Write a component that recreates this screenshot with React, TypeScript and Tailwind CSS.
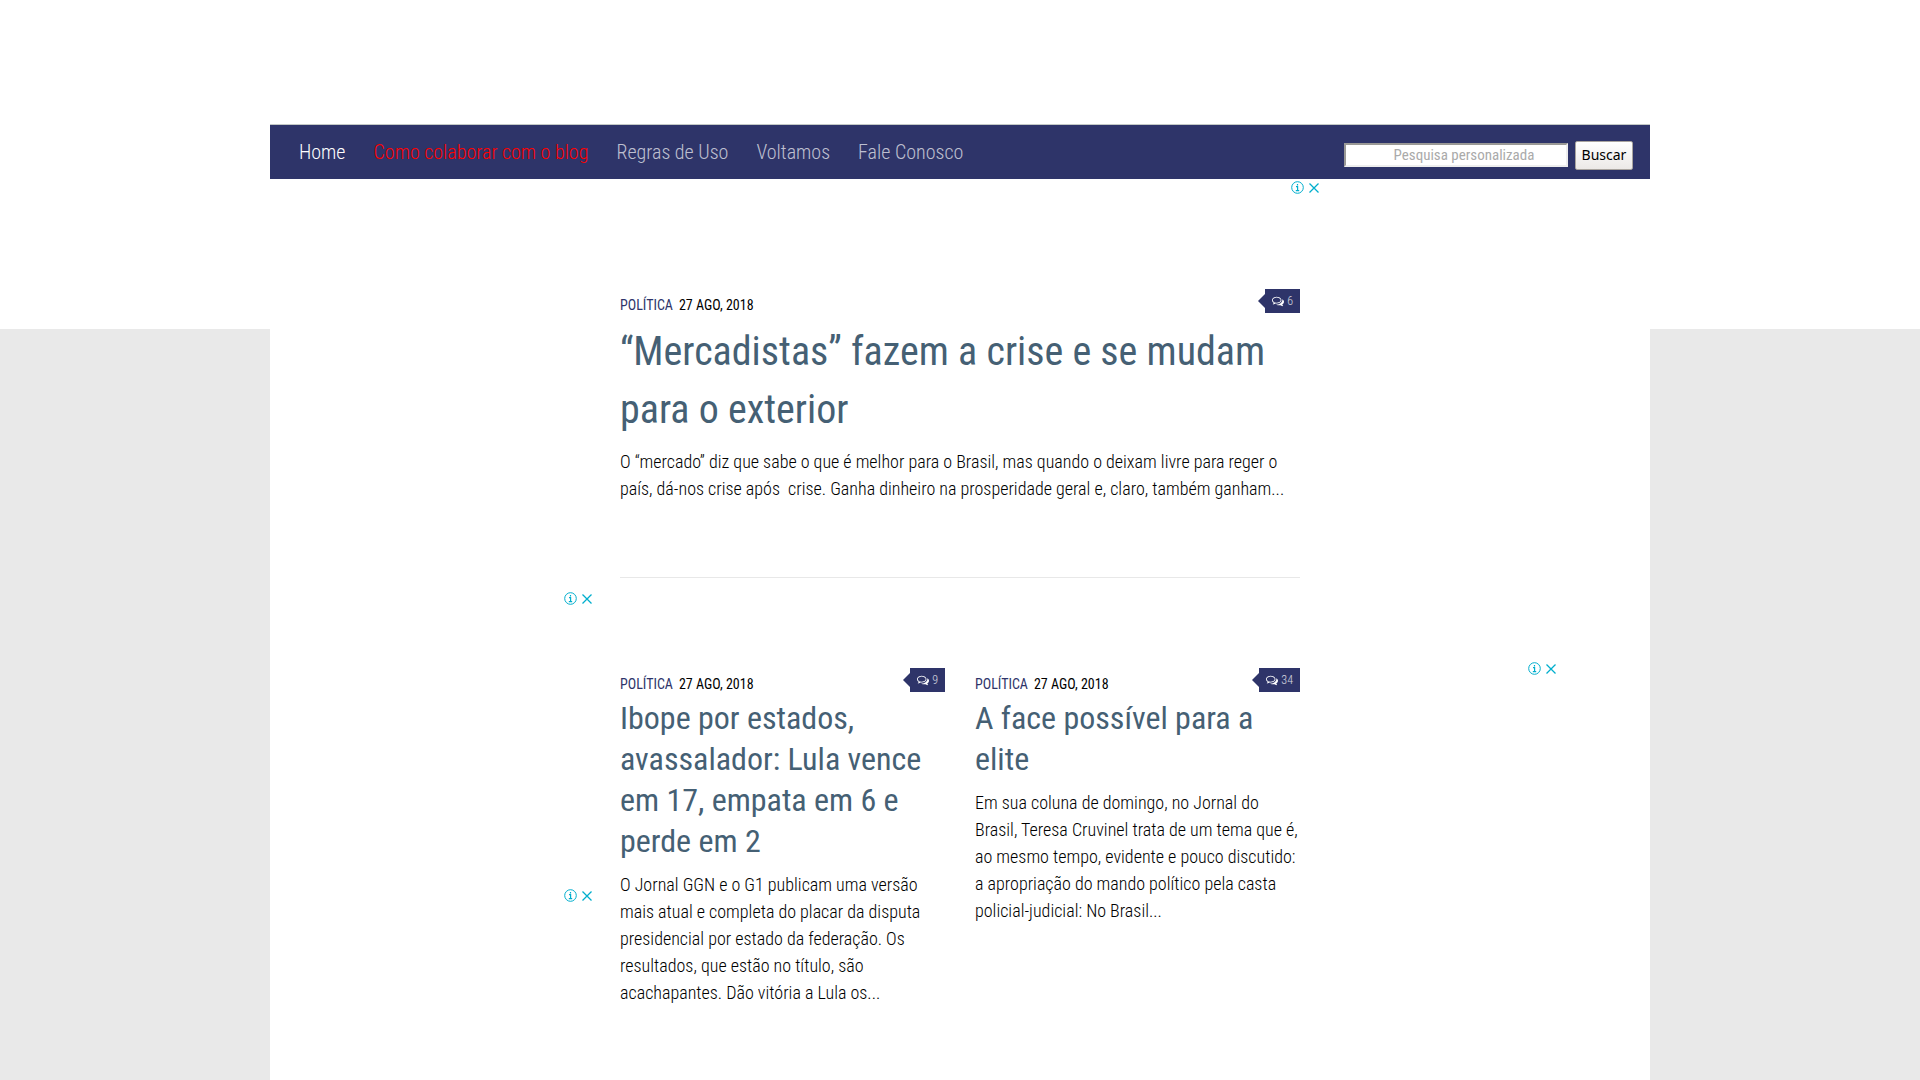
import React from "react";

type Post = { title: string; excerpt: string; comments: number };

const lead: Post = {
  title: "“Mercadistas” fazem a crise e se mudam para o exterior",
  excerpt:
    "O “mercado” diz que sabe o que é melhor para o Brasil, mas quando o deixam livre para reger o país, dá-nos crise após \u00a0crise. Ganha dinheiro na prosperidade geral e, claro, também ganham...",
  comments: 6,
};

const posts: Post[] = [
  {
    title: "Ibope por estados, avassalador: Lula vence em 17, empata em 6 e perde em 2",
    excerpt:
      "O Jornal GGN e o G1 publicam uma versão mais atual e completa do placar da disputa presidencial por estado da federação. Os resultados, que estão no título, são acachapantes. Dão vitória a Lula os...",
    comments: 9,
  },
  {
    title: "A face possível para a elite",
    excerpt:
      "Em sua coluna de domingo, no Jornal do Brasil, Teresa Cruvinel trata de um tema que é, ao mesmo tempo, evidente e pouco discutido: a apropriação do mando político pela casta policial-judicial: No Brasil...",
    comments: 34,
  },
];

const links = [
  { label: "Home", color: "text-white" },
  { label: "Como colaborar com o blog", color: "text-[#ff0000]" },
  { label: "Regras de Uso", color: "text-white/70" },
  { label: "Voltamos", color: "text-white/70" },
  { label: "Fale Conosco", color: "text-white/70" },
];

function AdChoices() {
  return (
    <div className="flex h-[13px] items-center gap-1 text-[#00aecd]">
      <button type="button" aria-label="Sobre este anúncio">
        <svg viewBox="0 0 13 13" className="size-[13px]" fill="none" stroke="currentColor">
          <circle cx="6.5" cy="6.5" r="5.8" />
          <path d="M6.5 3v1.4M5 5.6h1.6V10M4.8 9.7h3.4" strokeWidth="1.2" />
        </svg>
      </button>
      <button type="button" aria-label="Fechar anúncio">
        <svg viewBox="0 0 12 12" className="size-3" fill="none" stroke="currentColor" strokeWidth="1.3">
          <path d="M1.5 1.5l9 9M10.5 1.5l-9 9" />
        </svg>
      </button>
    </div>
  );
}

function CommentsIcon() {
  return (
    <svg viewBox="0 0 1792 1792" className="size-3 fill-white" aria-hidden="true">
      <path d="M704 384q-153 0-286 52t-211.5 141-78.5 191q0 82 53 158t149 132l97 56-35 84q34-20 62-39l44-31 53 10q78 14 153 14 153 0 286-52t211.5-141 78.5-191-78.5-191-211.5-141-286-52zm0-128q191 0 353.5 68.5t256.5 186.5 94 257-94 257-256.5 186.5-353.5 68.5q-86 0-176-16-124 88-278 128-36 9-86 16h-3q-11 0-20.5-8t-11.5-21q-1-3-1-6.5t.5-6.5 2-6l2.5-5 3.5-5.5 4-5 4.5-5 4-4.5q5-6 23-25t26-29.5 22.5-29 25-38.5 20.5-44q-124-72-195-177t-71-224q0-139 94-257t256.5-186.5 353.5-68.5zm822 1169q10 24 20.5 44t25 38.5 22.5 29 26 29.5 23 25q1 1 4 4.5t4.5 5 4 5 3.5 5.5l2.5 5 2 6 .5 6.5-1 6.5q-3 14-13 22t-22 7q-50-7-86-16-154-40-278-128-90 16-176 16-271 0-472-132 58 4 88 4 161 0 309-45t264-129q125-92 192-212t67-254q0-77-23-152 129 71 204 178t75 230q0 120-71 224.5t-195 176.5z" />
    </svg>
  );
}

function CommentBadge({ count }: { count: number }) {
  return (
    <a href="#comentarios" className="flex items-center text-white/80">
      <span className="border-y-7 border-r-7 border-y-transparent border-r-[#2e3469]" />
      <span className="flex h-6 items-center gap-[3px] bg-[#2e3469] px-[7px] text-xs font-light">
        <CommentsIcon />
        {count}
      </span>
    </a>
  );
}

function Meta({ count }: { count: number }) {
  return (
    <div className="flex items-start justify-between">
      <p className="mt-1 flex gap-1.5 text-sm leading-6 uppercase">
        <a href="#politica" className="text-[#2e3469]">Política</a>
        <time dateTime="2018-08-27" className="text-black">27 ago, 2018</time>
      </p>
      <CommentBadge count={count} />
    </div>
  );
}

export default function App() {
  return (
    <div className="min-h-screen bg-[linear-gradient(#fff_329px,#e9e9e9_329px)] font-['Roboto_Condensed','Roboto',sans-serif] text-black">
      <div className="mx-auto min-h-screen max-w-[1380px] bg-white pt-31">
        <header className="flex h-[55px] items-center justify-between border-t border-[#c3c9c6] bg-[#2e3469] pr-[17px] pl-[29px]">
          <nav className="flex gap-7 text-xl font-light">
            {links.map((l) => (
              <a key={l.label} href="#inicio" className={l.color}>{l.label}</a>
            ))}
          </nav>
          <form className="mt-1.5 flex items-center gap-[7px]" onSubmit={(e) => e.preventDefault()}>
            <input
              aria-label="Pesquisa personalizada"
              placeholder="Pesquisa personalizada"
              className="h-6 w-56 border-2 border-t-[#9a9996] border-r-[#eee] border-b-[#eee] border-l-[#9a9996] bg-white pl-4 text-center text-[15px] placeholder:text-[#aaa]"
            />
            <button className="h-[29px] w-[58px] rounded-xs border border-[#a9a49f] bg-linear-to-b from-white to-[#ece9e7] font-['Noto_Sans',sans-serif] text-sm">
              Buscar
            </button>
          </form>
        </header>

        <div className="grid grid-cols-[350px_minmax(0,1fr)_350px]">
          <aside className="flex flex-col items-end gap-[284px] pt-[413px] pr-[27px]">
            <AdChoices />
            <AdChoices />
          </aside>

          <main>
            <div className="-mr-5 flex justify-end pt-0.5">
              <AdChoices />
            </div>
            <article className="mt-[95px] border-b border-[#e8e8e8] pb-[75px]">
              <Meta count={lead.comments} />
              <h2 className="mt-1.5 text-[40px] leading-[58px] text-[#456074]">
                <a href="#post">{lead.title}</a>
              </h2>
              <p className="mt-[9px] text-lg leading-[27px] font-light">{lead.excerpt}</p>
            </article>
            <div className="mt-[90px] grid grid-cols-2 gap-[30px]">
              {posts.map((p) => (
                <article key={p.title}>
                  <Meta count={p.comments} />
                  <h2 className="mt-0.5 text-[32px] leading-[41px] text-[#456074]">
                    <a href="#post">{p.title}</a>
                  </h2>
                  <p className="mt-[9px] text-lg leading-[27px] font-light">{p.excerpt}</p>
                </article>
              ))}
            </div>
          </main>

          <aside className="flex flex-col items-end pt-[483px] pr-[93px]">
            <AdChoices />
          </aside>
        </div>
      </div>
    </div>
  );
}
